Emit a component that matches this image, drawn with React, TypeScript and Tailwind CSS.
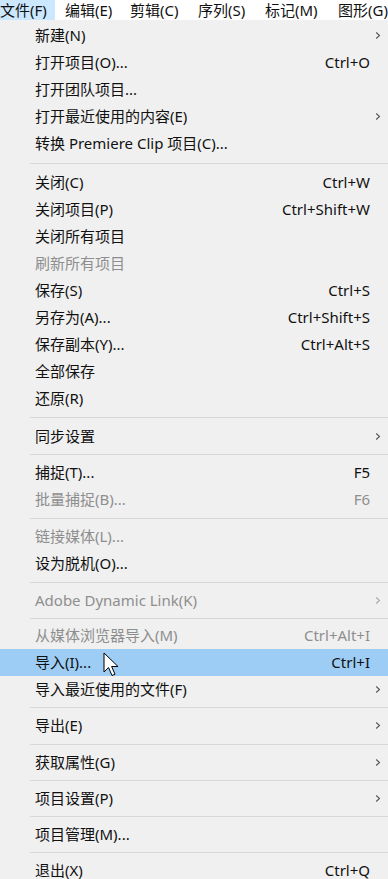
type Item = {
  label?: string
  shortcut?: string
  sub?: boolean
  disabled?: boolean
  active?: boolean
  sep?: number
}

const items: Item[] = [
  { label: '新建(N)', sub: true },
  { label: '打开项目(O)...', shortcut: 'Ctrl+O' },
  { label: '打开团队项目...' },
  { label: '打开最近使用的内容(E)', sub: true },
  { label: '转换 Premiere Clip 项目(C)...' },
  { sep: 12 },
  { label: '关闭(C)', shortcut: 'Ctrl+W' },
  { label: '关闭项目(P)', shortcut: 'Ctrl+Shift+W' },
  { label: '关闭所有项目' },
  { label: '刷新所有项目', disabled: true },
  { label: '保存(S)', shortcut: 'Ctrl+S' },
  { label: '另存为(A)...', shortcut: 'Ctrl+Shift+S' },
  { label: '保存副本(Y)...', shortcut: 'Ctrl+Alt+S' },
  { label: '全部保存' },
  { label: '还原(R)' },
  { sep: 11 },
  { label: '同步设置', sub: true },
  { sep: 9 },
  { label: '捕捉(T)...', shortcut: 'F5' },
  { label: '批量捕捉(B)...', shortcut: 'F6', disabled: true },
  { sep: 10 },
  { label: '链接媒体(L)...', disabled: true },
  { label: '设为脱机(O)...' },
  { sep: 10 },
  { label: 'Adobe Dynamic Link(K)', sub: true, disabled: true },
  { sep: 8 },
  { label: '从媒体浏览器导入(M)', shortcut: 'Ctrl+Alt+I', disabled: true },
  { label: '导入(I)...', shortcut: 'Ctrl+I', active: true },
  { label: '导入最近使用的文件(F)', sub: true },
  { sep: 9 },
  { label: '导出(E)', sub: true },
  { sep: 10 },
  { label: '获取属性(G)', sub: true },
  { sep: 9 },
  { label: '项目设置(P)', sub: true },
  { sep: 9 },
  { label: '项目管理(M)...' },
  { sep: 9 },
  { label: '退出(X)', shortcut: 'Ctrl+Q' },
]

// menubar entries, widths picked so the labels start where the screenshot has them
const bar = [
  { label: '文件(F)', cls: 'w-[55px] bg-[#cce8ff]' },
  { label: '编辑(E)', cls: 'w-[65px] pl-[10px]' },
  { label: '剪辑(C)', cls: 'w-[68px] pl-[10px]' },
  { label: '序列(S)', cls: 'w-[67px] pl-[10px]' },
  { label: '标记(M)', cls: 'w-[73px] pl-[10px]' },
  { label: '图形(G)', cls: 'w-[80px] pl-[10px]' },
]

function Chevron({ dim }: { dim?: boolean }) {
  return (
    <svg width="6" height="9" viewBox="0 0 6 9" className={dim ? 'text-[#a8a8a8]' : 'text-[#555]'}>
      <path d="M1.2 1.5 L4.5 4.5 L1.2 7.5" fill="none" stroke="currentColor" strokeWidth="1.1" />
    </svg>
  )
}

function Cursor() {
  return (
    <svg width="17" height="26" viewBox="0 0 17 26" className="absolute left-[103px] top-[3px]">
      <path
        d="M1 1 L1 20 L5.5 15.5 L9 23.5 L12 22.2 L8.6 14.5 L15 14.5 Z"
        fill="#fff"
        stroke="#000"
        strokeWidth="1"
        strokeLinejoin="round"
      />
    </svg>
  )
}

export default function App() {
  return (
    <div
      className="w-[388px] h-[879px] overflow-hidden bg-[#f0f0f0] text-[15px] text-[#111]"
      style={{ fontFamily: '"Noto Sans", "Noto Sans CJK SC", sans-serif' }}
    >
      <div className="flex h-[20px] items-center overflow-hidden bg-white">
        {bar.map((b) => (
          <div
            key={b.label}
            className={'flex h-full shrink-0 items-center whitespace-nowrap leading-none ' + b.cls}
          >
            {b.label}
          </div>
        ))}
      </div>
      <div className="pt-[2px]">
        {items.map((it, i) =>
          it.sep ? (
            <div key={i} className="flex items-center pl-[30px]" style={{ height: it.sep }}>
              <div className="h-px w-full bg-[#d7d7d7]" />
            </div>
          ) : (
            <div
              key={i}
              className={
                'relative flex h-[27px] items-center pl-[35px] pr-[6px] ' +
                (it.active ? 'bg-[#9dcdf5] ' : '') +
                (it.disabled ? 'text-[#8e8e8e]' : 'text-[#111]')
              }
            >
              <span className="flex-1 whitespace-nowrap">{it.label}</span>
              {it.shortcut && <span className="mr-[12px] whitespace-nowrap">{it.shortcut}</span>}
              {it.sub && (
                <span className="flex w-[8px] justify-center">
                  <Chevron dim={it.disabled} />
                </span>
              )}
              {it.active && <Cursor />}
            </div>
          )
        )}
      </div>
    </div>
  )
}
